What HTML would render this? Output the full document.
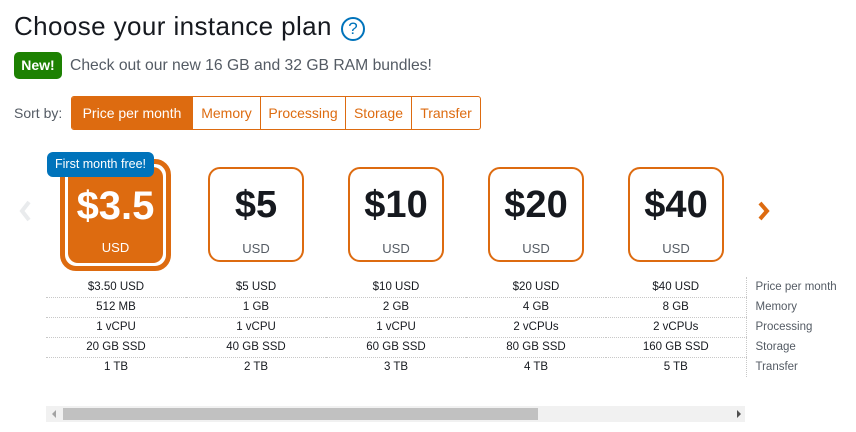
<!DOCTYPE html>
<html><head><style>
*{margin:0;padding:0;box-sizing:border-box}
body{width:856px;height:432px;background:#fff;font-family:"Liberation Sans",sans-serif;position:relative;overflow:hidden;color:#16191f}
.abs{position:absolute}
h1{position:absolute;left:14px;top:11px;font-size:26px;font-weight:normal;color:#16191f;letter-spacing:0.4px;white-space:nowrap}
.q{left:341px;top:17px;width:24px;height:24px;border:2px solid #0073bb;border-radius:50%;color:#0073bb;font-size:17px;text-align:center;line-height:20px}
.new{left:14px;top:52px;width:48px;height:27px;background:#1d8102;color:#fff;border-radius:5px;font-size:14px;font-weight:bold;text-align:center;line-height:27px}
.msg{left:70px;top:57px;font-size:15.7px;color:#545b64;white-space:nowrap}
.sort{left:14px;top:105px;font-size:14px;color:#545b64}
.btns{left:71px;top:96px;height:34px;display:flex;border:1px solid #dd6b10;border-radius:3px;overflow:hidden}
.btns div{height:32px;line-height:32px;font-size:14px;color:#dd6b10;border-left:1px solid #dd6b10;text-align:center;white-space:nowrap}
.btns div:first-child{border-left:none;background:#dd6b10;color:#fff}
.card{width:96px;height:95px;border:2px solid #dd6b10;border-radius:12px;text-align:center;top:167px}
.card .p{font-size:38px;font-weight:bold;margin-top:14px;line-height:44px}
.card .u{font-size:13px;color:#545b64;margin-top:14px}
.sel{left:60px;top:159px;width:111px;height:112px;border:5px solid #dd6b10;border-radius:16px}
.sel .in{position:absolute;left:3px;top:3px;right:3px;bottom:3px;background:#dd6b10;border-radius:10px;text-align:center;color:#fff}
.badge{left:47px;top:152px;width:107px;height:25px;background:#0073bb;color:#fff;border-radius:6px;font-size:12.5px;text-align:center;line-height:25px}
table{position:absolute;left:46px;top:277px;border-collapse:collapse;font-size:11.5px}
td{width:140px;height:20px;text-align:center;border-bottom:1px dotted #c8c8c8;padding:0}
tr:last-child td{border-bottom:none}
td.l{width:110px;text-align:left;padding-left:9px;color:#545b64;border-left:1px dotted #c8c8c8;border-bottom:none}
</style></head><body>
<h1>Choose your instance plan</h1>
<div class="abs q">?</div>
<div class="abs new">New!</div>
<div class="abs msg">Check out our new 16 GB and 32 GB RAM bundles!</div>
<div class="abs sort">Sort by:</div>
<div class="abs btns"><div style="width:120px">Price per month</div><div style="width:68px">Memory</div><div style="width:85px">Processing</div><div style="width:66px">Storage</div><div style="width:69px">Transfer</div></div>
<svg class="abs" style="left:17px;top:199px" width="16" height="24"><path d="M12 3 L5 12 L12 21" stroke="#e9ebed" stroke-width="4" fill="none"/></svg>
<svg class="abs" style="left:756px;top:199px" width="16" height="24"><path d="M4 4 L11 12 L4 20" stroke="#dd6b10" stroke-width="4" fill="none"/></svg>
<div class="abs sel"><div class="in"><div style="font-size:40px;font-weight:bold;margin-top:17px;line-height:44px">$3.5</div><div style="font-size:13px;margin-top:12px">USD</div></div></div>
<div class="abs badge">First month free!</div>
<div class="abs card" style="left:208px"><div class="p">$5</div><div class="u">USD</div></div>
<div class="abs card" style="left:348px"><div class="p">$10</div><div class="u">USD</div></div>
<div class="abs card" style="left:488px"><div class="p">$20</div><div class="u">USD</div></div>
<div class="abs card" style="left:628px"><div class="p">$40</div><div class="u">USD</div></div>
<table>
<tr><td>$3.50 USD</td><td>$5 USD</td><td>$10 USD</td><td>$20 USD</td><td>$40 USD</td><td class="l">Price per month</td></tr>
<tr><td>512 MB</td><td>1 GB</td><td>2 GB</td><td>4 GB</td><td>8 GB</td><td class="l">Memory</td></tr>
<tr><td>1 vCPU</td><td>1 vCPU</td><td>1 vCPU</td><td>2 vCPUs</td><td>2 vCPUs</td><td class="l">Processing</td></tr>
<tr><td>20 GB SSD</td><td>40 GB SSD</td><td>60 GB SSD</td><td>80 GB SSD</td><td>160 GB SSD</td><td class="l">Storage</td></tr>
<tr><td>1 TB</td><td>2 TB</td><td>3 TB</td><td>4 TB</td><td>5 TB</td><td class="l">Transfer</td></tr>
</table>
<div class="abs" style="left:46px;top:406px;width:699px;height:16px;background:#f1f1f1"></div>
<div class="abs" style="left:63px;top:408px;width:475px;height:12px;background:#c1c1c1"></div>
<svg class="abs" style="left:50px;top:409px" width="8" height="10"><path d="M6 1 L2 5 L6 9Z" fill="#a3a3a3"/></svg>
<svg class="abs" style="left:735px;top:409px" width="8" height="10"><path d="M2 1 L6 5 L2 9Z" fill="#505050"/></svg>
</body></html>
